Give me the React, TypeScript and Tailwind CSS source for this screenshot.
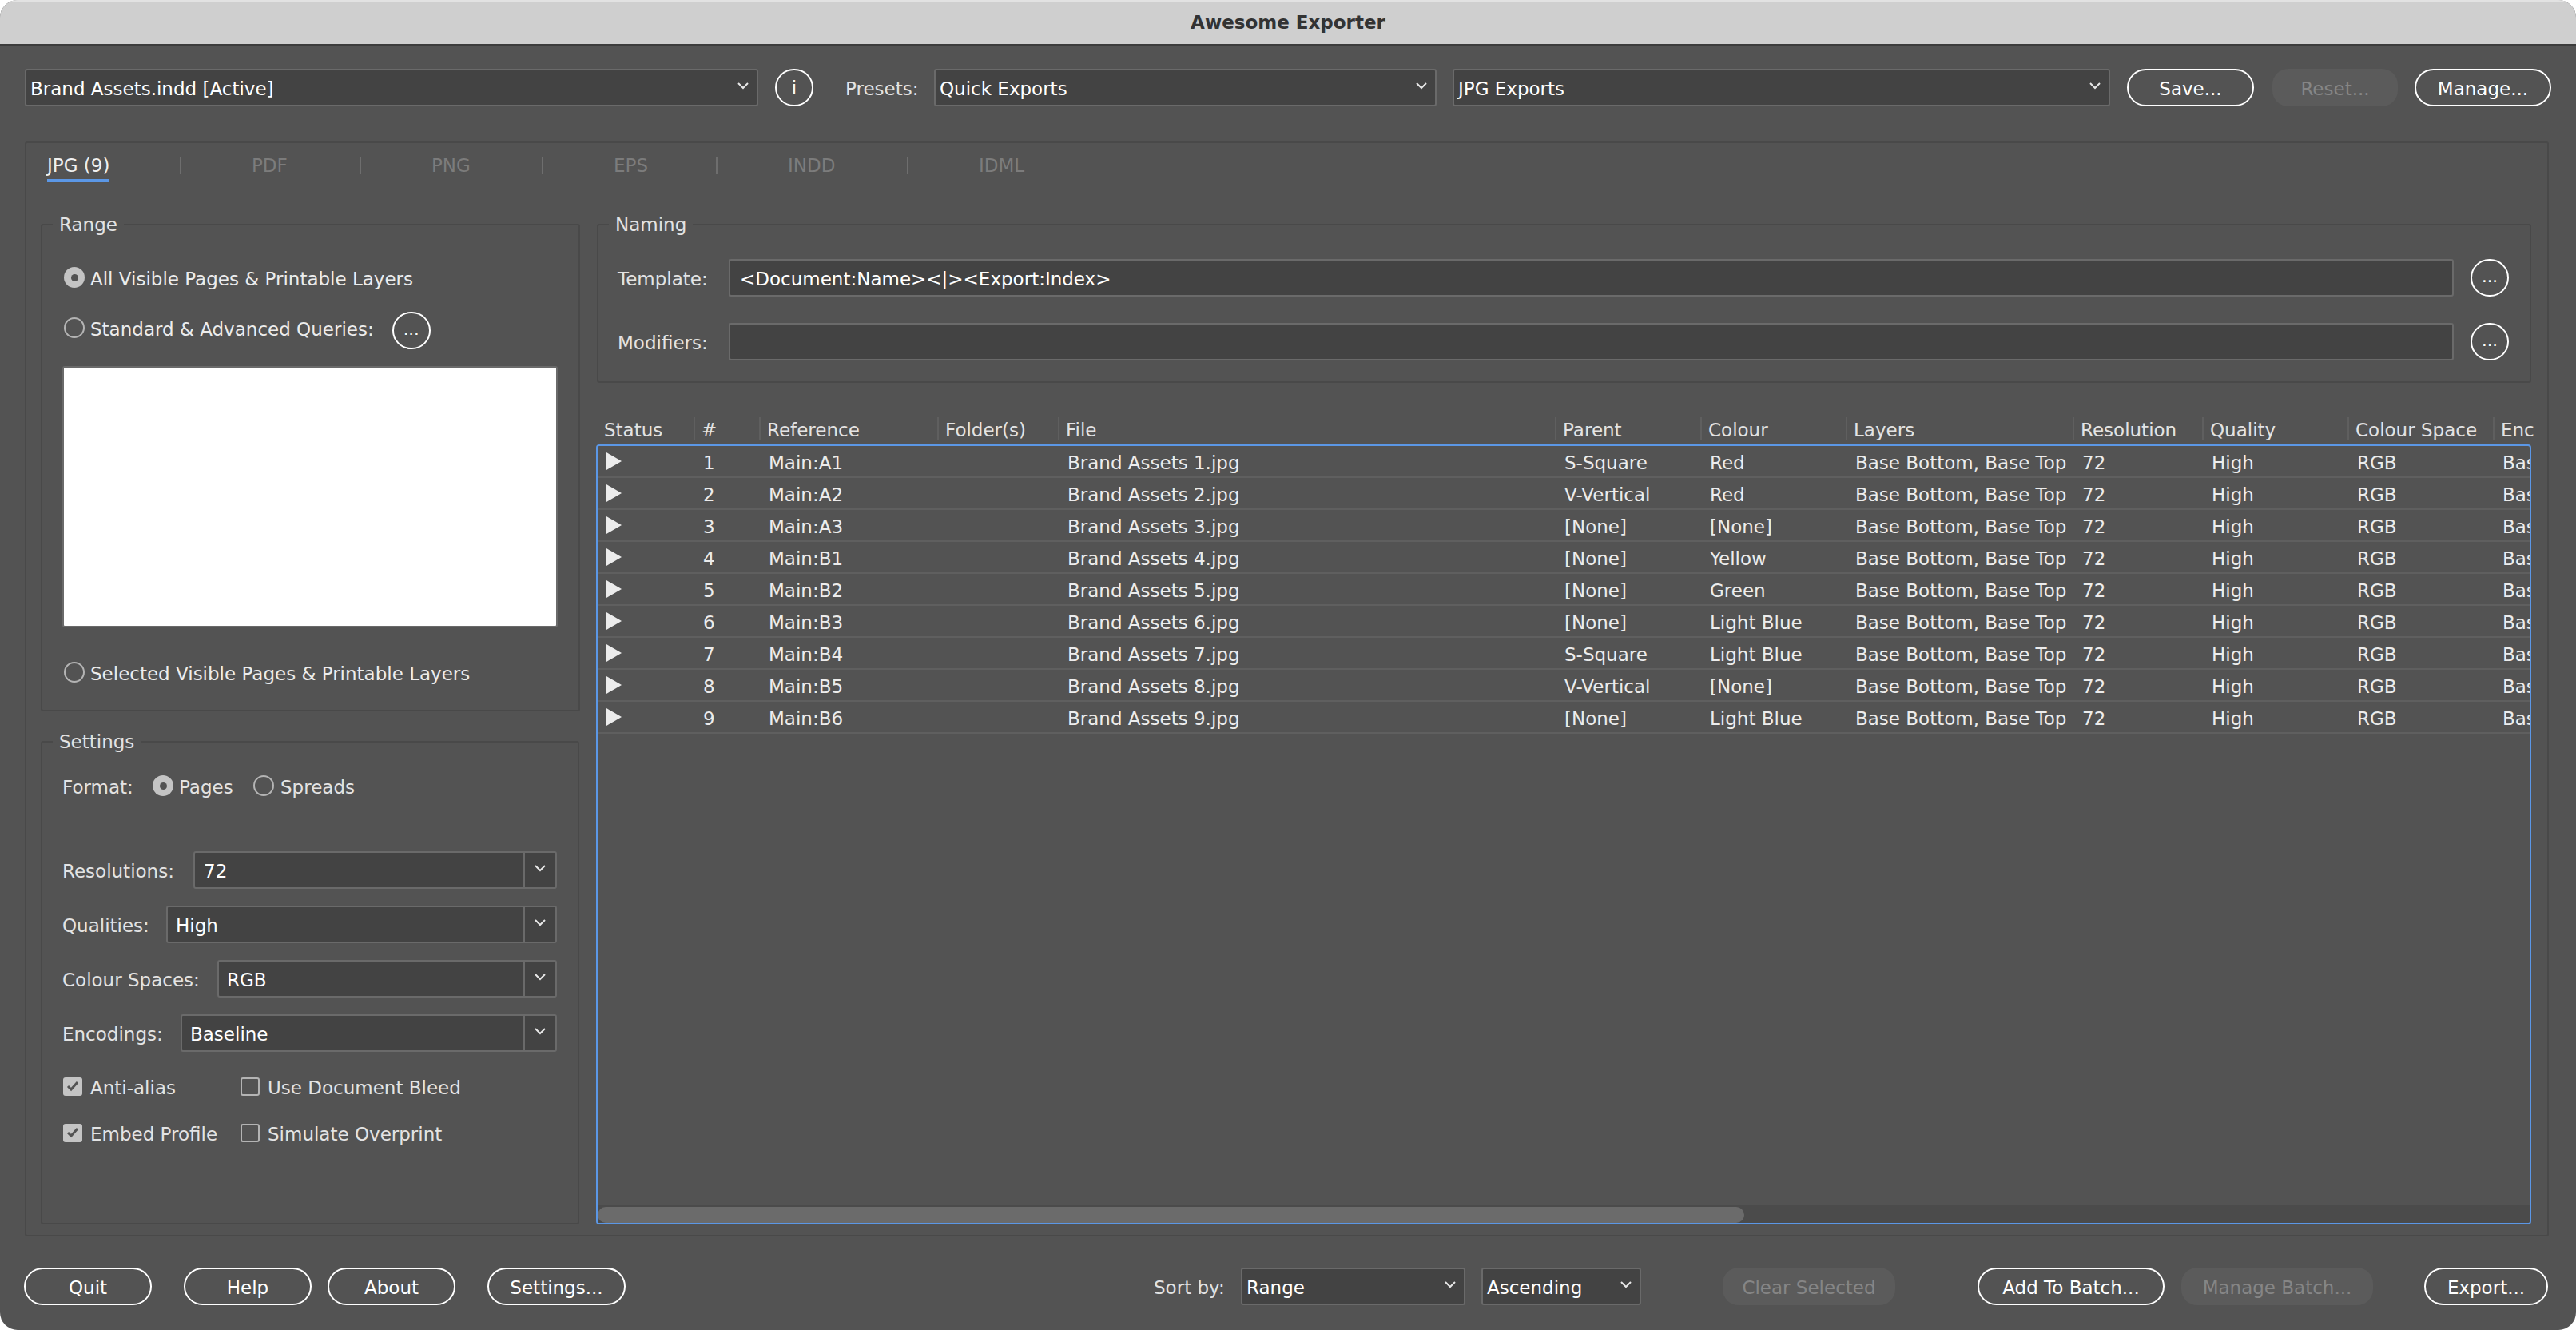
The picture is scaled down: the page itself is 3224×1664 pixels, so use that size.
import { ReactNode } from "react";

const btn = "flex items-center justify-center h-[47px] pt-[3px] rounded-full border-2 border-white text-white shrink-0";
const btnOff = "flex items-center justify-center h-[47px] pt-[3px] rounded-[20px] bg-[#5b5b5b] text-[#868686] shrink-0";
const field = "h-[47px] bg-[#434343] border-2 border-[#6a6a6a] rounded-[3px] text-white flex items-center";
const label = "text-[#e3e3e3] pt-[3px] shrink-0";

const tabs = [
  { label: "PDF", width: "w-[225px]" },
  { label: "PNG", width: "w-[228px]" },
  { label: "EPS", width: "w-[218px]" },
  { label: "INDD", width: "w-[239px]" },
  { label: "IDML", width: "w-[200px]" },
];

const columns = [
  { label: "Status", width: "w-[122px]" },
  { label: "#", width: "w-[82px]" },
  { label: "Reference", width: "w-[223px]" },
  { label: "Folder(s)", width: "w-[151px]" },
  { label: "File", width: "w-[622px]" },
  { label: "Parent", width: "w-[182px]" },
  { label: "Colour", width: "w-[182px]" },
  { label: "Layers", width: "w-[284px]" },
  { label: "Resolution", width: "w-[162px]" },
  { label: "Quality", width: "w-[182px]" },
  { label: "Colour Space", width: "w-[182px]" },
  { label: "Enc", width: "w-[46px]" },
];

const rows = [
  ["1", "Main:A1", "S-Square", "Red"],
  ["2", "Main:A2", "V-Vertical", "Red"],
  ["3", "Main:A3", "[None]", "[None]"],
  ["4", "Main:B1", "[None]", "Yellow"],
  ["5", "Main:B2", "[None]", "Green"],
  ["6", "Main:B3", "[None]", "Light Blue"],
  ["7", "Main:B4", "S-Square", "Light Blue"],
  ["8", "Main:B5", "V-Vertical", "[None]"],
  ["9", "Main:B6", "[None]", "Light Blue"],
];

function Chevron() {
  return (
    <svg width="16" height="10" viewBox="0 0 16 10" className="shrink-0">
      <polyline points="2,2 8,8 14,2" fill="none" stroke="#e8e8e8" strokeWidth="2" />
    </svg>
  );
}

function Select({ text, className }: { text: string; className: string }) {
  return (
    <div className={`${field} pl-[5px] pr-[9px] justify-between shrink-0 ${className}`}>
      <span className="whitespace-nowrap pt-[3px]">{text}</span>
      <span className="-translate-y-[3px]">
        <Chevron />
      </span>
    </div>
  );
}

function Radio({ checked }: { checked?: boolean }) {
  return checked ? (
    <span className="w-[26px] h-[26px] rounded-full bg-[#c4c4c4] flex items-center justify-center shrink-0">
      <span className="w-[9px] h-[9px] rounded-full bg-[#535353]" />
    </span>
  ) : (
    <span className="w-[26px] h-[26px] rounded-full border-2 border-[#b4b4b4] shrink-0" />
  );
}

function Check({ checked }: { checked?: boolean }) {
  return checked ? (
    <span className="w-[24px] h-[23px] rounded-[3px] bg-[#c4c4c4] flex items-center justify-center shrink-0">
      <svg width="16" height="14" viewBox="0 0 16 14">
        <polyline points="2,7 6,11 14,2" fill="none" stroke="#535353" strokeWidth="3" />
      </svg>
    </span>
  ) : (
    <span className="w-[24px] h-[23px] rounded-[3px] border-2 border-[#b4b4b4] shrink-0" />
  );
}

function Dots() {
  return (
    <div className="w-[48px] h-[47px] rounded-full border-2 border-white flex items-center justify-center shrink-0 text-white text-[21px] pb-[3px]">
      ...
    </div>
  );
}

function Group({ title, className, children }: { title: string; className: string; children: ReactNode }) {
  return (
    <fieldset className={`border-2 border-[#494949] rounded-[3px] ${className}`}>
      <legend className="ml-[13px] px-[8px] h-[32px] leading-[32px] text-[#e3e3e3]">{title}</legend>
      {children}
    </fieldset>
  );
}

function Combo({ text, value, labelWidth, textPad }: { text: string; value: string; labelWidth: string; textPad: string }) {
  return (
    <div className="flex items-center h-[47px]">
      <span className={`${label} ${labelWidth}`}>{text}</span>
      <div className={`${field} flex-1 justify-between`}>
        <span className={`pt-[3px] ${textPad}`}>{value}</span>
        <span className="w-[40px] h-full border-l-2 border-[#6a6a6a] flex items-center justify-center">
          <span className="-translate-y-[3px]">
            <Chevron />
          </span>
        </span>
      </div>
    </div>
  );
}

function CheckRow({ a, b, aOn }: { a: string; b: string; aOn?: boolean }) {
  return (
    <div className="flex items-center h-[46px] pl-[1px]">
      <span className="flex items-center gap-[10px] w-[222px]">
        <Check checked={aOn} />
        <span className={label}>{a}</span>
      </span>
      <span className="flex items-center gap-[10px]">
        <Check />
        <span className={label}>{b}</span>
      </span>
    </div>
  );
}

function TableRow({ row }: { row: string[] }) {
  const values = [
    "",
    row[0],
    row[1],
    "",
    `Brand Assets ${row[0]}.jpg`,
    row[2],
    row[3],
    "Base Bottom, Base Top",
    "72",
    "High",
    "RGB",
    "Bas",
  ];
  return (
    <div className="flex h-[40px] items-center border-b-2 border-[#5f5f5f] text-[#ececec] shrink-0">
      {values.map((value, i) => (
        <div
          key={i}
          className={`${i === 0 ? "w-[121px] pl-[11px]" : columns[i].width + " pl-[11px] pt-[3px]"} shrink-0 overflow-hidden whitespace-nowrap`}
        >
          {i === 0 ? (
            <svg width="19" height="22" viewBox="0 0 19 22" className="block">
              <polygon points="0,0 19,11 0,22" fill="#ececec" />
            </svg>
          ) : (
            value
          )}
        </div>
      ))}
    </div>
  );
}

export default function App() {
  return (
    <div className="w-[3224px] h-[1664px] bg-white overflow-hidden font-['DejaVu_Sans',sans-serif] text-[23px] leading-[32px]">
      <div className="w-full h-full rounded-[22px] bg-[#535353] overflow-hidden flex flex-col">
        {/* title bar */}
        <div className="h-[57px] shrink-0 bg-[#cfcfcf] border-t-2 border-t-[#e2e2e2] border-b-2 border-b-[#3c3c3c] flex items-center justify-center pb-[2px]">
          <span className="text-[#333333] font-semibold">Awesome Exporter</span>
        </div>

        {/* top row */}
        <div className="flex items-center pl-[31px] mt-[29px] shrink-0">
          <Select text="Brand Assets.indd [Active]" className="w-[918px]" />
          <div className="ml-[21px] w-[48px] h-[47px] rounded-full border-2 border-white flex items-center justify-center text-white shrink-0">
            i
          </div>
          <span className={`${label} ml-[40px] w-[111px]`}>Presets:</span>
          <Select text="Quick Exports" className="w-[629px]" />
          <Select text="JPG Exports" className="w-[823px] ml-[20px]" />
          <div className={`${btn} w-[159px] ml-[21px]`}>Save...</div>
          <div className={`${btnOff} w-[157px] ml-[23px]`}>Reset...</div>
          <div className={`${btn} w-[171px] ml-[21px]`}>Manage...</div>
        </div>

        {/* tab panel */}
        <div className="ml-[31px] mt-[44px] w-[3159px] h-[1370px] border-2 border-[#494949] rounded-[3px] shrink-0 pl-[18px]">
          <div className="flex h-[40px] mt-[9px] items-start">
            <div className="w-[174px] pl-[8px] shrink-0">
              <span className="inline-block h-[40px] leading-[38px] border-b-4 border-[#5b97e6] text-[#f0f0f0]">JPG (9)</span>
            </div>
            {tabs.map((tab) => (
              <div key={tab.label} className={`${tab.width} flex items-start shrink-0`}>
                <span className="w-[2px] h-[21px] mt-[9px] bg-[#6e6e6e] shrink-0" />
                <span className="ml-[88px] leading-[38px] text-[#7c7c7c]">{tab.label}</span>
              </div>
            ))}
          </div>

          <div className="flex mt-[37px] items-start">
            {/* left column */}
            <div className="w-[674px] shrink-0 flex flex-col">
              <Group title="Range" className="h-[625px]">
                <div className="pl-[27px] pr-[26px]">
                  <div className="flex items-center gap-[7px] h-[46px] mt-[27px] text-[#ececec]">
                    <Radio checked />
                    <span className="pt-[3px]">All Visible Pages &amp; Printable Layers</span>
                  </div>
                  <div className="flex items-center h-[47px] mt-[20px] text-[#ececec]">
                    <span className="flex items-center gap-[7px] mb-[7px]">
                      <Radio />
                      <span className="pt-[3px]">Standard &amp; Advanced Queries:</span>
                    </span>
                    <span className="ml-[23px]">
                      <Dots />
                    </span>
                  </div>
                  <div className="-ml-[2px] w-[620px] h-[327px] mt-[21px] bg-white border-2 border-t-[3px] border-[#6a6a6a] rounded-[3px]" />
                  <div className="flex items-center gap-[7px] h-[46px] mt-[33px] text-[#ececec]">
                    <Radio />
                    <span className="pt-[3px]">Selected Visible Pages &amp; Printable Layers</span>
                  </div>
                </div>
              </Group>

              <Group title="Settings" className="h-[620px] mt-[22px]">
                <div className="pl-[25px] pr-[26px]">
                  <div className="flex items-center h-[46px] mt-[16px]">
                    <span className={`${label} w-[113px]`}>Format:</span>
                    <Radio checked />
                    <span className={`${label} ml-[7px] w-[93px]`}>Pages</span>
                    <Radio />
                    <span className={`${label} ml-[8px]`}>Spreads</span>
                  </div>
                  <div className="flex flex-col gap-[21px] mt-[59px]">
                    <Combo text="Resolutions:" value="72" labelWidth="w-[164px]" textPad="pl-[11px]" />
                    <Combo text="Qualities:" value="High" labelWidth="w-[130px]" textPad="pl-[10px]" />
                    <Combo text="Colour Spaces:" value="RGB" labelWidth="w-[194px]" textPad="pl-[10px]" />
                    <Combo text="Encodings:" value="Baseline" labelWidth="w-[148px]" textPad="pl-[10px]" />
                  </div>
                  <div className="mt-[20px]">
                    <CheckRow a="Anti-alias" b="Use Document Bleed" aOn />
                  </div>
                  <div className="mt-[12px]">
                    <CheckRow a="Embed Profile" b="Simulate Overprint" aOn />
                  </div>
                </div>
              </Group>
            </div>

            {/* right column */}
            <div className="ml-[22px] w-[2421px] shrink-0 flex flex-col">
              <Group title="Naming" className="h-[214px]">
                <div className="pl-[24px] pr-[26px]">
                  <div className="flex items-center mt-[27px]">
                    <span className={`${label} w-[139px]`}>Template:</span>
                    <div className={`${field} flex-1 pl-[12px]`}>
                      <span className="pt-[3px]">&lt;Document:Name&gt;&lt;|&gt;&lt;Export:Index&gt;</span>
                    </div>
                    <span className="ml-[21px]">
                      <Dots />
                    </span>
                  </div>
                  <div className="flex items-center mt-[33px]">
                    <span className={`${label} w-[139px]`}>Modifiers:</span>
                    <div className={`${field} flex-1`} />
                    <span className="ml-[21px]">
                      <Dots />
                    </span>
                  </div>
                </div>
              </Group>

              {/* table */}
              <div className="flex h-[34px] mt-[43px] -ml-[1px] text-[#e3e3e3]">
                {columns.map((col, i) => (
                  <div
                    key={col.label}
                    className={`${col.width} shrink-0 h-[28px] flex items-center whitespace-nowrap ${i === 0 ? "pl-[10px]" : "pl-[8px] border-l-2 border-[#5f5f5f]"}`}
                  >
                    <span className="pt-[3px]">{col.label}</span>
                  </div>
                ))}
              </div>
              <div className="h-[976px] -ml-[1px] border-2 border-[#5b97e6] rounded-[4px] flex flex-col overflow-hidden">
                <div className="flex-1 overflow-hidden">
                  {rows.map((row) => (
                    <TableRow key={row[0]} row={row} />
                  ))}
                </div>
                <div className="h-[22px] bg-[#4b4b4b] pt-[2px] shrink-0">
                  <div className="w-[1435px] h-[20px] bg-[#6b6b6b] rounded-full" />
                </div>
              </div>
            </div>
          </div>
        </div>

        {/* footer */}
        <div className="flex items-center pl-[30px] mt-[39px] shrink-0">
          <div className={`${btn} w-[160px]`}>Quit</div>
          <div className={`${btn} w-[160px] ml-[40px]`}>Help</div>
          <div className={`${btn} w-[160px] ml-[20px]`}>About</div>
          <div className={`${btn} w-[173px] ml-[40px]`}>Settings...</div>
          <span className={`${label} ml-[661px] w-[109px]`}>Sort by:</span>
          <Select text="Range" className="w-[281px]" />
          <Select text="Ascending" className="w-[200px] ml-[20px]" />
          <div className={`${btnOff} w-[216px] ml-[102px]`}>Clear Selected</div>
          <div className={`${btn} w-[234px] ml-[103px]`}>Add To Batch...</div>
          <div className={`${btnOff} w-[240px] ml-[21px]`}>Manage Batch...</div>
          <div className={`${btn} w-[155px] ml-[64px]`}>Export...</div>
        </div>
      </div>
    </div>
  );
}
